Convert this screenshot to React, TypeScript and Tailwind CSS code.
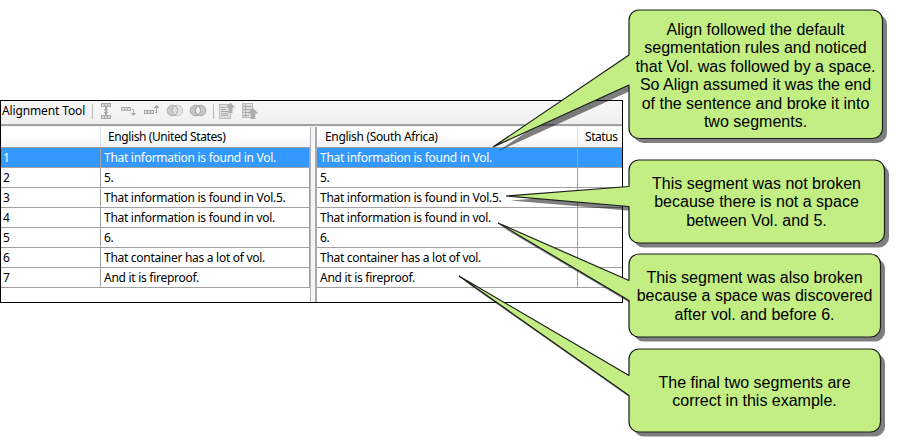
import React from "react";

const rows: string[] = [
  "That information is found in Vol.",
  "5.",
  "That information is found in Vol.5.",
  "That information is found in vol.",
  "6.",
  "That container has a lot of vol.",
  "And it is fireproof.",
];

function ToolbarIcons() {
  return (
    <svg width="170" height="23" viewBox="90 101 170 23" shapeRendering="crispEdges" fill="none">
      <path d="M92.500 104V119M213.500 104V119" stroke="#b8b8b8" />
      {/* expand rows */}
      <g stroke="#a8a8a8" fill="#d9d9d9">
        <path d="M101.500 103.500h9v3h-9zM101.500 115.500h9v3h-9z" />
        <path d="M104.500 103v4M107.500 103v4M104.500 115v4M107.500 115v4" />
        <path d="M106 107v8" strokeWidth="2" />
        <path d="M104 109.500h4M104 112.500h4" />
      </g>
      {/* move down */}
      <g stroke="#b0b0b0" fill="#dedede">
        <path d="M121.500 107.500h9v3h-9zM124.500 107v4M127.500 107v4" />
        <path d="M132 109.500h1.500v6" fill="none" />
        <path d="M131 113.500h5M132 114.500h3M133 115.500h1" fill="none" />
      </g>
      {/* move up */}
      <g stroke="#a3a3a3" fill="#dedede">
        <path d="M144.500 110.500h9v3h-9zM147.500 110v4M150.500 110v4" />
        <path d="M155 112.500h1.500v-7" fill="none" />
        <path d="M154 107.500h5M155 106.500h3M156 105.500h1" fill="none" />
      </g>
      {/* join and split */}
      <g shapeRendering="geometricPrecision">
        <circle cx="177.500" cy="110.500" r="5.300" fill="#e4e4e4" stroke="#c6c6c6" />
        <circle cx="172.500" cy="110.500" r="5.300" fill="#c9c9c9" stroke="#b0b0b0" />
        <path d="M175 106a5.300 5.300 0 0 1 0 9a5.300 5.300 0 0 1 0-9z" fill="#e2e2e2" stroke="#b5b5b5" />
        <circle cx="195.500" cy="110.500" r="5.300" fill="#c6c6c6" stroke="#a6a6a6" />
        <circle cx="200.500" cy="110.500" r="5.300" fill="#c6c6c6" stroke="#a6a6a6" />
        <path d="M198 106a5.300 5.300 0 0 1 0 9a5.300 5.300 0 0 1 0-9z" fill="#f0f0f0" stroke="#a2a2a2" />
      </g>
      {/* pages with arrows */}
      <path d="M219.500 104.500h11v14h-11z" fill="#dfdfdf" stroke="#bcbcbc" />
      <path d="M221 107.500h4M221 109.500h5M221 111.500h7M221 113.500h7M221 115.500h7" stroke="#aaa" />
      <path d="M230.500 102.500l4.800 5h-2.800v5.500h-4v-5.500h-2.800z" fill="#acacac" shapeRendering="geometricPrecision" />
      <path d="M242.500 103.500h10v14h-10z" fill="#dfdfdf" stroke="#bcbcbc" />
      <path d="M243 106.500h9M243 109.500h9M243 112.500h6M243 115.500h6M245.500 104v13" stroke="#aaa" />
      <path d="M253 108l5.300 5.500h-3v5.500h-4.600v-5.500h-3z" fill="#acacac" shapeRendering="geometricPrecision" />
    </svg>
  );
}

const headerRow =
  "flex h-[21px] border-b border-[#a0a0a0] bg-gradient-to-b from-white from-40% to-[#f1f2f4] leading-[20px] whitespace-nowrap";

function rowClass(selected: boolean) {
  return (
    "flex h-[20px] border-b border-[#a0a0a0] leading-[19px] whitespace-nowrap tracking-[-0.28px] " +
    (selected ? "bg-[#3399ff] text-white" : "bg-white text-black")
  );
}

function LeftTable() {
  return (
    <div className="w-[310px] border-r border-[#b0b2b8]">
      <div className={headerRow}>
        <div className="w-[100px] border-r border-[#dedfe1]" />
        <div className="pl-[7px] tracking-[-0.4px]">English (United States)</div>
      </div>
      {rows.map((text, i) => (
        <div key={i} className={rowClass(i === 0)}>
          <div className="w-[100px] border-r border-[#a0a0a0] pl-[2px]">{i + 1}</div>
          <div className="flex-1 border-r border-[#a0a0a0] pl-[3px]">{text}</div>
        </div>
      ))}
    </div>
  );
}

function RightTable() {
  return (
    <div className="flex-1 border-l-2 border-[#a8aaae]">
      <div className={headerRow}>
        <div className="w-[261px] border-r border-[#dedfe1] pl-[8px] tracking-[-0.32px]">English (South Africa)</div>
        <div className="pl-[7px] tracking-[-0.45px]">Status</div>
      </div>
      {rows.map((text, i) => (
        <div key={i} className={rowClass(i === 0)}>
          <div className="w-[261px] border-r border-[#a0a0a0] pl-[3px]">{text}</div>
          <div className="flex-1" />
        </div>
      ))}
    </div>
  );
}

function AlignmentTool() {
  return (
    <div className="flex h-[203px] w-[623px] flex-col border border-black bg-white font-['Noto_Sans','Open_Sans',sans-serif] text-[12px]">
      <div className="flex h-[23px] bg-gradient-to-b from-[#f8f8f8] to-[#efefef]">
        <div className="w-[89px] pl-px leading-[20px] whitespace-nowrap tracking-[-0.13px]">Alignment Tool</div>
        <ToolbarIcons />
      </div>
      <div className="h-[3px] border-b border-[#f4f4f4] bg-[#a0a2a5]" />
      <div className="flex flex-1">
        <LeftTable />
        <div className="w-[4px] bg-[#f6f6f6]" />
        <RightTable />
      </div>
    </div>
  );
}

type Box = { r: number; t: number; b: number; y1: number; y2: number; tx: number; ty: number };

const boxes: Box[] = [
  { r: 882.5, t: 10, b: 138.5, y1: 55, y2: 85, tx: 493, ty: 147 },
  { r: 884.5, t: 160, b: 243, y1: 186.5, y2: 206.5, tx: 506, ty: 196 },
  { r: 880.5, t: 254, b: 337, y1: 280.5, y2: 300.5, tx: 498, ty: 223 },
  { r: 880.5, t: 349, b: 432, y1: 375.5, y2: 395.5, tx: 459, ty: 276 },
];

function bubble({ r, t, b, y1, y2, tx, ty }: Box) {
  const l = 629;
  const q = 10;
  return `M${l + q} ${t}H${r - q}A${q} ${q} 0 0 1 ${r} ${t + q}V${b - q}A${q} ${q} 0 0 1 ${r - q} ${b}H${l + q}A${q} ${q} 0 0 1 ${l} ${b - q}V${y2}L${tx} ${ty}L${l} ${y1}V${t + q}A${q} ${q} 0 0 1 ${l + q} ${t}Z`;
}

function Note({ place, lines }: { place: string; lines: string[] }) {
  return (
    <div
      className={
        "absolute left-[629px] text-center font-['Liberation_Sans',Arial,sans-serif] text-[16px] leading-[18.4px] whitespace-nowrap text-black " +
        place
      }
    >
      {lines.map((line) => (
        <div key={line}>{line}</div>
      ))}
    </div>
  );
}

export default function App() {
  return (
    <div className="relative h-[447px] w-[899px] overflow-hidden bg-white pt-[100px]">
      <AlignmentTool />
      <svg className="absolute inset-0" width="899" height="447" viewBox="0 0 899 447">
        {boxes.map((box) => (
          <g key={box.t} strokeLinejoin="bevel">
            <path d={bubble(box)} transform="translate(4.500 4.500)" fill="#000" fillOpacity="0.5" />
            <path d={bubble(box)} fill="#c2ee84" stroke="#1c1c1c" strokeWidth="1.200" />
          </g>
        ))}
      </svg>
      <Note
        place="top-[21px] w-[253px]"
        lines={[
          "Align followed the default",
          "segmentation rules and noticed",
          "that Vol. was followed by a space.",
          "So Align assumed it was the end",
          "of the sentence and broke it into",
          "two segments.",
        ]}
      />
      <Note
        place="top-[175px] w-[255px]"
        lines={["This segment was not broken", "because there is not a space", "between Vol. and 5."]}
      />
      <Note
        place="top-[269px] w-[251px]"
        lines={["This segment was also broken", "because a space was discovered", "after vol. and before 6."]}
      />
      <Note place="top-[374px] w-[251px]" lines={["The final two segments are", "correct in this example."]} />
    </div>
  );
}
